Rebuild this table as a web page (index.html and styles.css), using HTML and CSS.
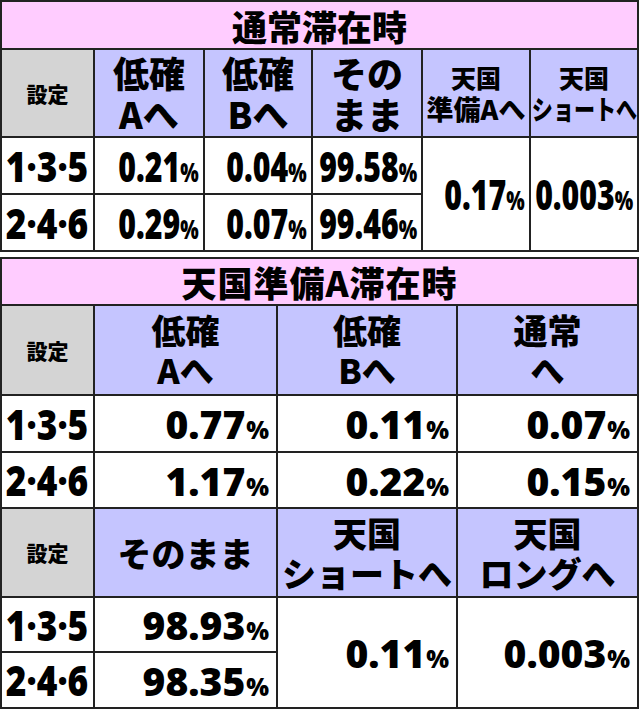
FILE: index.html
```html
<!DOCTYPE html>
<html lang="ja">
<head>
<meta charset="utf-8">
<link rel="stylesheet" href="styles.css">
</head>
<body>
<div class="page">
  <div class="tbl t1">
    <div class="title">通常滞在時</div>
    <div class="cell gray"><span class="set">設定</span></div>
    <div class="cell head"><div class="hd"><div class="ln">低確</div><div class="ln">Aへ</div></div></div>
    <div class="cell head"><div class="hd"><div class="ln">低確</div><div class="ln">Bへ</div></div></div>
    <div class="cell head"><div class="hd"><div class="ln">その</div><div class="ln">まま</div></div></div>
    <div class="cell head"><div class="hd sm"><div class="ln l1">天国</div><div class="ln l2">準備Aへ</div></div></div>
    <div class="cell head"><div class="hd sm"><div class="ln l1">天国</div><div class="ln l2"><span class="cond">ショートへ</span></div></div></div>

    <div class="cell ctr"><span class="st">1·3·5</span></div>
    <div class="cell num"><span class="n1">0.21<small>%</small></span></div>
    <div class="cell num"><span class="n1">0.04<small>%</small></span></div>
    <div class="cell num"><span class="n1">99.58<small>%</small></span></div>
    <div class="cell num span2"><span class="n1">0.17<small>%</small></span></div>
    <div class="cell num span2"><span class="n1">0.003<small>%</small></span></div>

    <div class="cell ctr"><span class="st">2·4·6</span></div>
    <div class="cell num"><span class="n1">0.29<small>%</small></span></div>
    <div class="cell num"><span class="n1">0.07<small>%</small></span></div>
    <div class="cell num"><span class="n1">99.46<small>%</small></span></div>
  </div>

  <div class="tbl t2">
    <div class="title wide">天国準備A滞在時</div>
    <div class="cell gray"><span class="set">設定</span></div>
    <div class="cell head"><div class="hd"><div class="ln">低確</div><div class="ln">Aへ</div></div></div>
    <div class="cell head"><div class="hd"><div class="ln">低確</div><div class="ln">Bへ</div></div></div>
    <div class="cell head"><div class="hd"><div class="ln">通常</div><div class="ln">へ</div></div></div>

    <div class="cell ctr"><span class="st">1·3·5</span></div>
    <div class="cell num2"><span class="n2">0.77<small>%</small></span></div>
    <div class="cell num2"><span class="n2">0.11<small>%</small></span></div>
    <div class="cell num2"><span class="n2">0.07<small>%</small></span></div>

    <div class="cell ctr"><span class="st">2·4·6</span></div>
    <div class="cell num2"><span class="n2">1.17<small>%</small></span></div>
    <div class="cell num2"><span class="n2">0.22<small>%</small></span></div>
    <div class="cell num2"><span class="n2">0.15<small>%</small></span></div>

    <div class="cell gray"><span class="set">設定</span></div>
    <div class="cell head"><div class="hd one">そのまま</div></div>
    <div class="cell head"><div class="hd"><div class="ln">天国</div><div class="ln">ショートへ</div></div></div>
    <div class="cell head"><div class="hd"><div class="ln">天国</div><div class="ln">ロングへ</div></div></div>

    <div class="cell ctr"><span class="st">1·3·5</span></div>
    <div class="cell num2"><span class="n2">98.93<small>%</small></span></div>
    <div class="cell num2 span2"><span class="n2">0.11<small>%</small></span></div>
    <div class="cell num2 span2"><span class="n2">0.003<small>%</small></span></div>

    <div class="cell ctr"><span class="st">2·4·6</span></div>
    <div class="cell num2"><span class="n2">98.35<small>%</small></span></div>
  </div>
</div>
</body>
</html>
```

FILE: styles.css
```css
html, body {
  margin: 0;
  padding: 0;
  background: #ffffff;
}

.page {
  width: 640px;
  height: 711px;
  overflow: hidden;
  font-family: "Noto Sans CJK JP", "Noto Sans", sans-serif;
  color: #000;
}

.tbl {
  display: grid;
  width: 639px;
  box-sizing: border-box;
  gap: 2px;
  padding: 2px;
  background: #222222;
}

.t1 {
  grid-template-columns: 91px 108px 106px 108px 106px 106px;
  grid-template-rows: 46px 86px 55px 55px;
}

.t2 {
  margin-top: 5px;
  grid-template-columns: 91px 181px 178px 179px;
  grid-template-rows: 45px 88px 55px 54px 87px 53px 54px;
}

.title {
  grid-column: 1 / -1;
  background: #ffccff;
  display: flex;
  align-items: center;
  justify-content: center;
  font-weight: 900;
  font-size: 35px;
  line-height: 1;
}

.title.wide {
  letter-spacing: 1px;
}

.cell {
  background: #ffffff;
  display: flex;
  align-items: center;
  overflow: visible;
  min-width: 0;
}

.gray {
  background: #d4d4d4;
  justify-content: center;
}

.head {
  background: #c5c5ff;
  justify-content: center;
}

.ctr {
  justify-content: center;
}

.span2 {
  grid-row: span 2;
}

.set {
  font-weight: 900;
  font-size: 21px;
  line-height: 1;
}

.hd {
  display: flex;
  flex-direction: column;
  align-items: center;
  font-weight: 900;
  font-size: 36px;
  white-space: nowrap;
}

.hd .ln {
  height: 41px;
  line-height: 41px;
}

.t2 .hd {
  font-size: 34px;
}

.t2 .hd .ln {
  height: 40px;
  line-height: 40px;
}

.hd.one {
  font-size: 34px;
  line-height: 1;
}

.hd.sm .ln {
  height: 32px;
  line-height: 32px;
}

.hd.sm .l1 {
  font-size: 25px;
}

.hd.sm .l2 {
  font-size: 27px;
}

.cond {
  display: inline-block;
  transform: scaleX(0.78);
  transform-origin: center;
}

.st {
  display: inline-block;
  font-family: "Open Sans", "Liberation Sans", sans-serif;
  font-weight: 800;
  font-size: 42px;
  line-height: 1;
  transform: scaleX(0.84);
  transform-origin: center;
  white-space: nowrap;
}

.num {
  justify-content: flex-end;
  padding-right: 4px;
}

.num2 {
  justify-content: flex-end;
  padding-right: 7px;
}

.n1 {
  display: inline-block;
  font-family: "Open Sans", "Liberation Sans", sans-serif;
  font-weight: 800;
  font-size: 42px;
  line-height: 1;
  transform: scaleX(0.72);
  transform-origin: right center;
  white-space: nowrap;
}

.n1 small {
  font-size: 27px;
}

.n2 {
  display: inline-block;
  font-family: "Open Sans", "Liberation Sans", sans-serif;
  font-weight: 800;
  font-size: 39px;
  line-height: 1;
  white-space: nowrap;
}

.n2 small {
  font-size: 24px;
  margin-left: 1px;
}
```
